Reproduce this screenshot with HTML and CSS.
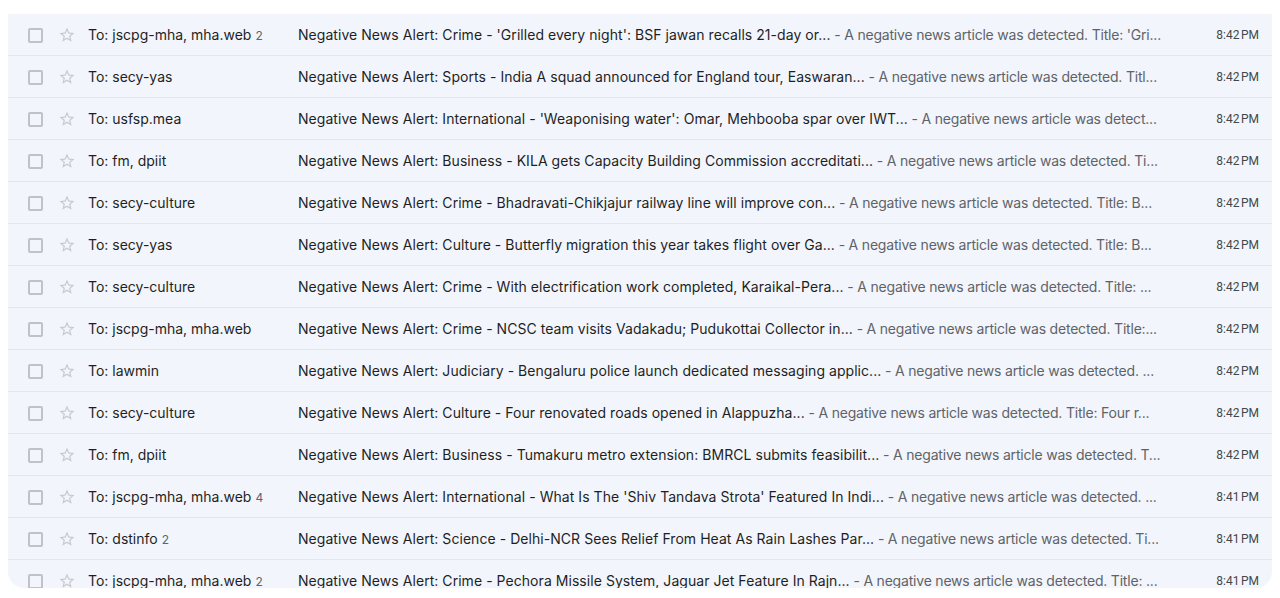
FILE: index.html
```html
<!DOCTYPE html>
<html lang="en">
<head>
<meta charset="utf-8">
<title>Inbox</title>
<link rel="stylesheet" href="styles.css">
</head>
<body>
<svg width="0" height="0" class="defs" aria-hidden="true">
  <defs>
    <path id="star" d="M22 9.24l-7.19-.62L12 2 9.19 8.63 2 9.24l5.46 4.73L5.82 21 12 17.27 18.18 21l-1.63-7.03L22 9.24zM12 15.4l-3.76 2.27 1-4.28-3.32-2.88 4.38-.38L12 6.1l1.71 4.04 4.38.38-3.32 2.88 1 4.28L12 15.4z"/>
  </defs>
</svg>
<main class="list">
  <div class="row"><span class="check"></span><svg class="star" viewBox="0 0 24 24"><use href="#star"/></svg><span class="sender">To: jscpg-mha, mha.web <span class="count">2</span></span><span class="content"><span class="subject">Negative News Alert: Crime - 'Grilled every night': BSF jawan recalls 21-day or...</span><span class="snippet"> - A negative news article was detected. Title: 'Gri...</span></span><span class="time">8:42&#8239;PM</span></div>
  <div class="row"><span class="check"></span><svg class="star" viewBox="0 0 24 24"><use href="#star"/></svg><span class="sender">To: secy-yas</span><span class="content"><span class="subject">Negative News Alert: Sports - India A squad announced for England tour, Easwaran...</span><span class="snippet"> - A negative news article was detected. Titl...</span></span><span class="time">8:42&#8239;PM</span></div>
  <div class="row"><span class="check"></span><svg class="star" viewBox="0 0 24 24"><use href="#star"/></svg><span class="sender">To: usfsp.mea</span><span class="content"><span class="subject">Negative News Alert: International - 'Weaponising water': Omar, Mehbooba spar over IWT...</span><span class="snippet"> - A negative news article was detect...</span></span><span class="time">8:42&#8239;PM</span></div>
  <div class="row"><span class="check"></span><svg class="star" viewBox="0 0 24 24"><use href="#star"/></svg><span class="sender">To: fm, dpiit</span><span class="content"><span class="subject">Negative News Alert: Business - KILA gets Capacity Building Commission accreditati...</span><span class="snippet"> - A negative news article was detected. Ti...</span></span><span class="time">8:42&#8239;PM</span></div>
  <div class="row"><span class="check"></span><svg class="star" viewBox="0 0 24 24"><use href="#star"/></svg><span class="sender">To: secy-culture</span><span class="content"><span class="subject">Negative News Alert: Crime - Bhadravati-Chikjajur railway line will improve con...</span><span class="snippet"> - A negative news article was detected. Title: B...</span></span><span class="time">8:42&#8239;PM</span></div>
  <div class="row"><span class="check"></span><svg class="star" viewBox="0 0 24 24"><use href="#star"/></svg><span class="sender">To: secy-yas</span><span class="content"><span class="subject">Negative News Alert: Culture - Butterfly migration this year takes flight over Ga...</span><span class="snippet"> - A negative news article was detected. Title: B...</span></span><span class="time">8:42&#8239;PM</span></div>
  <div class="row"><span class="check"></span><svg class="star" viewBox="0 0 24 24"><use href="#star"/></svg><span class="sender">To: secy-culture</span><span class="content"><span class="subject">Negative News Alert: Crime - With electrification work completed, Karaikal-Pera...</span><span class="snippet"> - A negative news article was detected. Title: ...</span></span><span class="time">8:42&#8239;PM</span></div>
  <div class="row"><span class="check"></span><svg class="star" viewBox="0 0 24 24"><use href="#star"/></svg><span class="sender">To: jscpg-mha, mha.web</span><span class="content"><span class="subject">Negative News Alert: Crime - NCSC team visits Vadakadu; Pudukottai Collector in...</span><span class="snippet"> - A negative news article was detected. Title:...</span></span><span class="time">8:42&#8239;PM</span></div>
  <div class="row"><span class="check"></span><svg class="star" viewBox="0 0 24 24"><use href="#star"/></svg><span class="sender">To: lawmin</span><span class="content"><span class="subject">Negative News Alert: Judiciary - Bengaluru police launch dedicated messaging applic...</span><span class="snippet"> - A negative news article was detected. ...</span></span><span class="time">8:42&#8239;PM</span></div>
  <div class="row"><span class="check"></span><svg class="star" viewBox="0 0 24 24"><use href="#star"/></svg><span class="sender">To: secy-culture</span><span class="content"><span class="subject">Negative News Alert: Culture - Four renovated roads opened in Alappuzha...</span><span class="snippet"> - A negative news article was detected. Title: Four r...</span></span><span class="time">8:42&#8239;PM</span></div>
  <div class="row"><span class="check"></span><svg class="star" viewBox="0 0 24 24"><use href="#star"/></svg><span class="sender">To: fm, dpiit</span><span class="content"><span class="subject">Negative News Alert: Business - Tumakuru metro extension: BMRCL submits feasibilit...</span><span class="snippet"> - A negative news article was detected. T...</span></span><span class="time">8:42&#8239;PM</span></div>
  <div class="row"><span class="check"></span><svg class="star" viewBox="0 0 24 24"><use href="#star"/></svg><span class="sender">To: jscpg-mha, mha.web <span class="count">4</span></span><span class="content"><span class="subject">Negative News Alert: International - What Is The 'Shiv Tandava Strota' Featured In Indi...</span><span class="snippet"> - A negative news article was detected. ...</span></span><span class="time">8:41&#8239;PM</span></div>
  <div class="row"><span class="check"></span><svg class="star" viewBox="0 0 24 24"><use href="#star"/></svg><span class="sender">To: dstinfo <span class="count">2</span></span><span class="content"><span class="subject">Negative News Alert: Science - Delhi-NCR Sees Relief From Heat As Rain Lashes Par...</span><span class="snippet"> - A negative news article was detected. Ti...</span></span><span class="time">8:41&#8239;PM</span></div>
  <div class="row"><span class="check"></span><svg class="star" viewBox="0 0 24 24"><use href="#star"/></svg><span class="sender">To: jscpg-mha, mha.web <span class="count">2</span></span><span class="content"><span class="subject">Negative News Alert: Crime - Pechora Missile System, Jaguar Jet Feature In Rajn...</span><span class="snippet"> - A negative news article was detected. Title: ...</span></span><span class="time">8:41&#8239;PM</span></div>
</main>
</body>
</html>
```
FILE: styles.css
```css
html, body {
  margin: 0;
  background: #ffffff;
}
body {
  padding: 14px 8px 0 8px;
  font-family: Inter, Roboto, "Liberation Sans", Arial, sans-serif;
  font-size: 14px;
  color: #1f1f1f;
}
.defs {
  position: absolute;
  width: 0;
  height: 0;
}
.list {
  height: 574px;
  overflow: hidden;
  background: #f2f6fc;
  border-radius: 0 0 16px 16px;
}
.row {
  display: flex;
  align-items: center;
  height: 42px;
  box-sizing: border-box;
  padding: 0 13px 0 20px;
  box-shadow: inset 0 -1px 0 0 rgba(100, 121, 143, 0.122);
  white-space: nowrap;
  line-height: 20px;
}
.check {
  flex: none;
  width: 11px;
  height: 11px;
  border: 2px solid #bfc2c6;
  border-radius: 2px;
  margin-right: 15px;
}
.star {
  flex: none;
  width: 18px;
  height: 18px;
  fill: #c7c9cc;
  margin-right: 12px;
}
.sender {
  flex: none;
  width: 210px;
  overflow: hidden;
  color: #1f1f1f;
}
.count {
  font-size: 12px;
  color: #5f6368;
}
.content {
  flex: 1;
  min-width: 0;
  overflow: hidden;
  text-overflow: ellipsis;
  margin-top: -1px;
}
.subject {
  color: #1f1f1f;
  letter-spacing: 0.05px;
}
.snippet {
  color: #5f6368;
  letter-spacing: -0.2px;
}
.time {
  flex: none;
  width: 60px;
  text-align: right;
  font-family: Roboto, "Liberation Sans", Arial, sans-serif;
  font-size: 12px;
  color: #444746;
}
```
